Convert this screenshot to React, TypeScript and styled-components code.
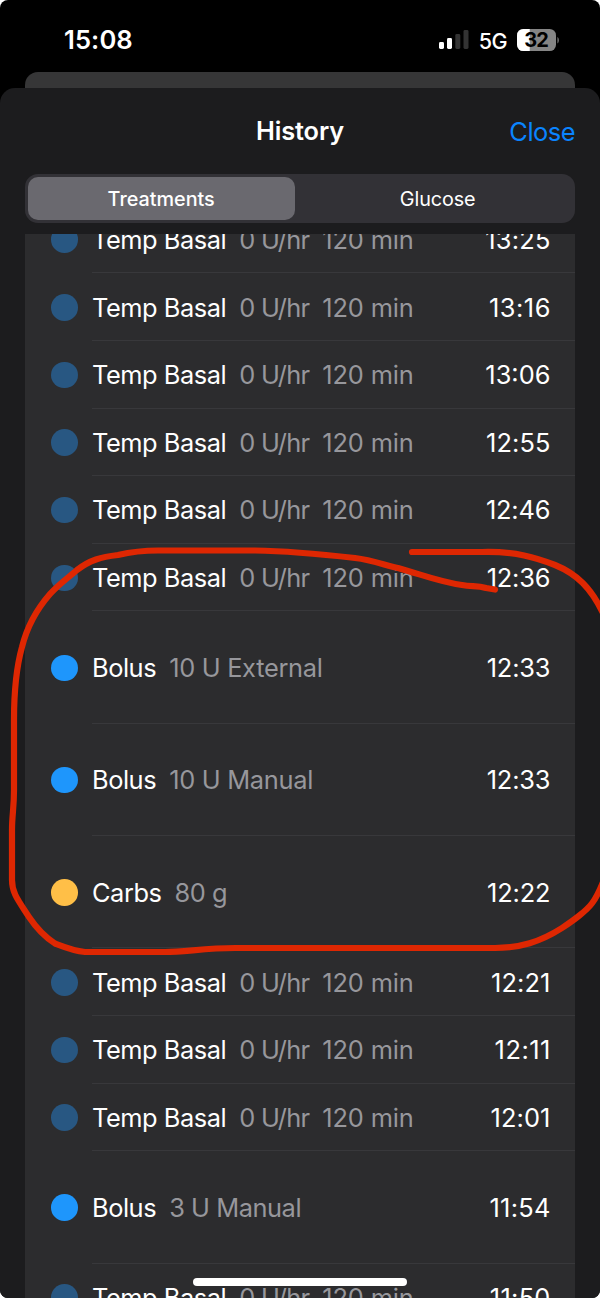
import React from "react";
import styled, { createGlobalStyle } from "styled-components";

const Global = createGlobalStyle`
  * { box-sizing: border-box; }
  html, body { margin: 0; padding: 0; background: #fff; }
  body { font-family: Inter, "Liberation Sans", sans-serif; color: #fff; }
`;

const Screen = styled.div`
  position: relative;
  display: flex;
  flex-direction: column;
  width: 600px;
  height: 1298px;
  overflow: hidden;
  background: #000;
  border-radius: 8px;
`;

const StatusBar = styled.header`
  display: flex;
  flex: none;
  height: 72px;
  padding: 8px 41px 0 64px;
  justify-content: space-between;
`;

const Clock = styled.time`
  font-size: 25.6px;
  font-weight: 600;
  line-height: 64px;
  letter-spacing: 0.1px;
`;

const StatusIcons = styled.div`
  display: flex;
  height: 64px;
  align-items: center;
`;

const Network = styled.span`
  margin: 1px 10px 0 10px;
  font-size: 21.5px;
  font-weight: 500;
  letter-spacing: -0.6px;
`;

const BackCard = styled.div`
  flex: none;
  height: 16px;
  margin: 0 25px;
  border-radius: 13px 13px 0 0;
  background: #363637;
`;

const Sheet = styled.main`
  display: flex;
  flex: 1;
  min-height: 0;
  flex-direction: column;
  padding: 0 25px;
  border-radius: 15px 15px 0 0;
  background: #1c1c1e;
`;

const NavBar = styled.div`
  display: grid;
  flex: none;
  height: 86px;
  padding-bottom: 2px;
  grid-template-columns: 1fr auto 1fr;
  align-items: center;
`;

const Title = styled.h1`
  grid-column: 2;
  margin: 0;
  font-size: 25.3px;
  font-weight: 600;
  letter-spacing: -0.1px;
`;

const CloseButton = styled.button`
  justify-self: end;
  padding: 2px 0 0;
  border: 0;
  background: none;
  color: #0a84ff;
  font: 400 25.4px Inter, sans-serif;
  letter-spacing: -0.5px;
`;

const Segments = styled.div`
  display: grid;
  flex: none;
  height: 49px;
  grid-template-columns: 267.4px 1fr;
  padding: 3px;
  border-radius: 13px;
  background: #323136;
`;

const Segment = styled.button<{ $active?: boolean }>`
  padding: ${(p) => (p.$active ? "0 1px 0 0" : "0 0 0 8px")};
  border: 0;
  border-radius: 10px;
  background: ${(p) => (p.$active ? "#6a696f" : "transparent")};
  color: #fff;
  font: ${(p) => (p.$active ? 500 : 400)} 19.8px Inter, sans-serif;
  letter-spacing: ${(p) => (p.$active ? 0 : -0.1)}px;
`;

const ListViewport = styled.div`
  flex: 1;
  min-height: 0;
  margin-top: 11px;
  overflow: hidden;
  background: #2c2c2e;
`;

const List = styled.ul`
  margin: -28.4px 0 0;
  padding: 0;
  list-style: none;
`;

const Row = styled.li<{ $tall: boolean }>`
  display: flex;
  height: ${(p) => (p.$tall ? 112.35 : 67.65)}px;
  padding-left: 26px;
`;

const Dot = styled.span<{ $color: string }>`
  flex: none;
  align-self: center;
  width: 26.6px;
  height: 26.6px;
  margin-top: 0.4px;
  border-radius: 50%;
  background: ${(p) => p.$color};
`;

const RowBody = styled.div`
  display: flex;
  flex: 1;
  align-items: center;
  margin-left: 14.4px;
  padding: 1px 24.6px 0 0;
  border-bottom: 1px solid #38383b;
  font-size: 25.4px;
  white-space: pre;
`;

const Name = styled.span`
  margin-right: 13px;
  letter-spacing: -0.45px;
`;

const Detail = styled.span<{ $tracking: number }>`
  margin-right: 12.9px;
  color: #97979c;
  letter-spacing: ${(p) => p.$tracking}px;
`;

const Time = styled.time<{ $tracking: number }>`
  margin-right: ${(p) => -p.$tracking}px;
  margin-left: auto;
  letter-spacing: ${(p) => p.$tracking}px;
`;

const HomeIndicator = styled.div`
  position: absolute;
  bottom: 12px;
  left: 193px;
  width: 214px;
  height: 8px;
  border-radius: 4px;
  background: #fff;
`;

const Marker = styled.svg`
  position: absolute;
  inset: 0;
  pointer-events: none;
`;

const BatteryText = styled.text`
  font: 700 20px Inter, sans-serif;
  letter-spacing: -0.8px;
`;

const COLORS = { basal: "#285782", bolus: "#1e96fc", carbs: "#ffbf47" };

const TRACKING: Record<string, number> = {
  "13:25": 0.2,
  "13:16": 0.5,
  "13:06": 0,
  "12:55": 0.1,
  "12:21": 0.1,
  "12:11": 0.5,
  "12:01": 0.1,
  "11:54": 0.3,
  "11:50": 0.3,
  "0 U/hr": -0.7,
  "120 min": -0.15,
  "10 U External": -0.3,
  "10 U Manual": -0.3,
  "80 g": -0.4,
  "3 U Manual": -0.45,
};

type Entry = { kind: keyof typeof COLORS; name: string; details: string[]; time: string };

const basal = (time: string): Entry => ({
  kind: "basal",
  name: "Temp Basal",
  details: ["0 U/hr", "120 min"],
  time,
});
const bolus = (detail: string, time: string): Entry => ({
  kind: "bolus",
  name: "Bolus",
  details: [detail],
  time,
});

const entries: Entry[] = [
  ...["13:25", "13:16", "13:06", "12:55", "12:46", "12:36"].map(basal),
  bolus("10 U External", "12:33"),
  bolus("10 U Manual", "12:33"),
  { kind: "carbs", name: "Carbs", details: ["80 g"], time: "12:22" },
  ...["12:21", "12:11", "12:01"].map(basal),
  bolus("3 U Manual", "11:54"),
  basal("11:50"),
];

const Signal = () => (
  <svg width="30" height="20" viewBox="0 0 30 20">
    <rect x="0" y="12" width="5" height="7" rx="1.4" fill="#fff" />
    <rect x="8" y="8" width="5" height="11" rx="1.4" fill="#fff" />
    <rect x="16.3" y="4" width="5" height="15" rx="1.4" fill="#333" />
    <rect x="24.5" y="0" width="5" height="19" rx="1.4" fill="#333" />
  </svg>
);

const Battery = () => (
  <svg width="42" height="22" viewBox="0 0 42 22">
    <defs>
      <clipPath id="cell">
        <rect width="39" height="22" rx="6.3" />
      </clipPath>
    </defs>
    <g clipPath="url(#cell)">
      <rect width="39" height="22" fill="#858585" />
      <rect width="12.7" height="22" fill="#fff" />
    </g>
    <path d="M40.3 8v6.4c1.1-.5 1.7-1.7 1.7-3.2s-.6-2.7-1.7-3.2z" fill="#666" />
    <BatteryText x="19.2" y="18.2" textAnchor="middle" fill="#000">
      32
    </BatteryText>
  </svg>
);

export default function App() {
  return (
    <>
      <Global />
      <Screen>
        <StatusBar>
          <Clock>15:08</Clock>
          <StatusIcons>
            <Signal />
            <Network>5G</Network>
            <Battery />
          </StatusIcons>
        </StatusBar>
        <BackCard />
        <Sheet>
          <NavBar>
            <Title>History</Title>
            <CloseButton>Close</CloseButton>
          </NavBar>
          <Segments>
            <Segment $active>Treatments</Segment>
            <Segment>Glucose</Segment>
          </Segments>
          <ListViewport>
            <List>
              {entries.map((e, i) => (
                <Row key={i} $tall={e.kind !== "basal"}>
                  <Dot $color={COLORS[e.kind]} />
                  <RowBody>
                    <Name>{e.name}</Name>
                    {e.details.map((d) => (
                      <Detail key={d} $tracking={TRACKING[d] ?? -0.4}>
                        {d}
                      </Detail>
                    ))}
                    <Time $tracking={TRACKING[e.time] ?? -0.2}>{e.time}</Time>
                  </RowBody>
                </Row>
              ))}
            </List>
          </ListViewport>
        </Sheet>
        <Marker width="600" height="1298" viewBox="0 0 600 1298">
          <path
            d="M412 552H482C515 551 537 558 555 565C577 574 591 588 603 613M603 882C595 902 590 907 580 915C574 920 568 924 562 928C540 942 520 948 495 948H235C205 948 185 952 165 952H85C74 951 64 947 55 943.500C45 937 35 926 29 917C18 900 12 893 12 880V830C12 815 14 808 14 790V720C14 690 17 665 22 647C27 627 36 610 50 594C60 583 68 578 77 570C90 560 101 557 118 555C135 551 146 550.500 158 550.500H255C290 551 320 554 355 558C373 560 387 566 398 568C423 575 440 582 462 585C472 587 477 585 486 588L495 589.5"
            fill="none"
            stroke="#de2702"
            strokeWidth="6.2"
            strokeLinecap="round"
            strokeLinejoin="round"
          />
        </Marker>
        <HomeIndicator />
      </Screen>
    </>
  );
}
